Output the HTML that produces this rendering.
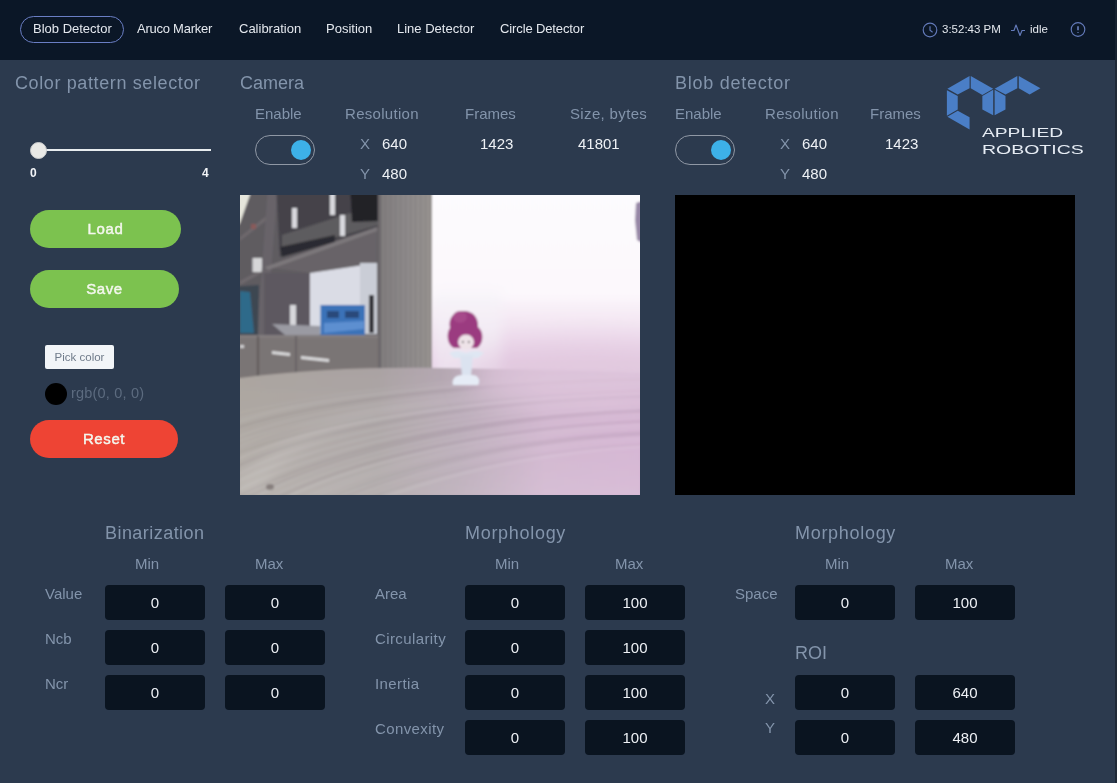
<!DOCTYPE html>
<html><head><meta charset="utf-8">
<style>
*{margin:0;padding:0;box-sizing:border-box}
html,body{width:1117px;height:783px;overflow:hidden;background:#2c3a4e;font-family:"Liberation Sans",sans-serif}
.a,.btn,.box{will-change:transform}
.a{position:absolute;white-space:nowrap;line-height:1}
#hdr{position:absolute;left:0;top:0;width:1117px;height:60px;background:#0b1727}
.nav{font-size:13px;color:#e4e8ee;top:22px}
.pill{position:absolute;left:20px;top:16px;width:104px;height:27px;border:1px solid #6a7ec4;border-radius:14px}
.t18{font-size:18px;color:#8394ab}
.t15{font-size:15px;color:#8394ab}
.v15{font-size:15px;color:#eef1f5}
.tog{position:absolute;width:60px;height:30px;border:1px solid #9098a5;border-radius:15px}
.tog i{position:absolute;left:35px;top:4px;width:20px;height:20px;border-radius:50%;background:#3db1e8}
.btn{position:absolute;height:38px;border-radius:19px;color:#f4f7ee;font-size:15px;font-weight:400;-webkit-text-stroke:0.45px #f4f7ee;display:flex;align-items:center;justify-content:center;letter-spacing:0.6px;padding-bottom:2px}
.box{position:absolute;width:100px;height:35px;background:#0a1420;border-radius:4px;color:#eef1f5;font-size:15px;display:flex;align-items:center;justify-content:center;padding-bottom:1px}
</style></head><body>
<div id="hdr">
  <div class="pill"></div>
  <div class="a nav" style="left:33px">Blob Detector</div>
  <div class="a nav" style="left:137px;letter-spacing:-0.25px">Aruco Marker</div>
  <div class="a nav" style="left:239px">Calibration</div>
  <div class="a nav" style="left:326px">Position</div>
  <div class="a nav" style="left:397px">Line Detector</div>
  <div class="a nav" style="left:500px;letter-spacing:-0.12px">Circle Detector</div>
  <svg class="a" style="left:922px;top:22px" width="16" height="16" viewBox="0 0 16 16"><circle cx="8" cy="8" r="6.8" fill="none" stroke="#637ab9" stroke-width="1.15"/><path d="M8 4.2V8.3L10.6 10.2" fill="none" stroke="#637ab9" stroke-width="1.15"/></svg>
  <div class="a nav" style="left:942px;font-size:11.5px;top:23.5px">3:52:43 PM</div>
  <svg class="a" style="left:1010px;top:22px" width="16" height="16" viewBox="0 0 16 16"><path d="M1 8.5H4L6 3L10 13.5L12 8.5H15" fill="none" stroke="#637ab9" stroke-width="1.15" stroke-linejoin="round"/></svg>
  <div class="a nav" style="left:1030px;font-size:11.5px;top:23.5px">idle</div>
  <svg class="a" style="left:1070px;top:22px" width="16" height="16" viewBox="0 0 16 16"><circle cx="8" cy="7.5" r="6.8" fill="none" stroke="#637ab9" stroke-width="1.15"/><path d="M8 4.3V8.2M8 10.2V10.9" fill="none" stroke="#6a80bd" stroke-width="1.6"/></svg>
</div>

<!-- left column -->
<div class="a t18" style="left:15px;top:73.7px;letter-spacing:0.62px">Color pattern selector</div>
<div class="a" style="left:38px;top:149px;width:173px;height:2px;background:#e8ecef"></div>
<div class="a" style="left:30px;top:141.5px;width:17px;height:17px;border-radius:50%;background:#e9e9e6;border:1px solid #c9cbcc"></div>
<div class="a" style="left:30px;top:166.5px;font-size:12px;font-weight:700;color:#f2f4f7">0</div>
<div class="a" style="left:201.5px;top:166.5px;font-size:12px;font-weight:700;color:#f2f4f7">4</div>
<div class="btn" style="left:30px;top:210px;width:151px;background:#7cc24f">Load</div>
<div class="btn" style="left:30px;top:270px;width:149px;background:#7cc24f">Save</div>
<div class="a" style="left:45px;top:345px;width:69px;height:24px;background:#f2f5f8;border-radius:2px;font-size:11.5px;color:#6f7b8a;display:flex;align-items:center;justify-content:center;padding-top:1.5px">Pick color</div>
<div class="a" style="left:45px;top:383px;width:22px;height:22px;border-radius:50%;background:#000"></div>
<div class="a" style="left:71px;top:386px;font-size:14.5px;color:#5c6b7f;letter-spacing:0.2px">rgb(0, 0, 0)</div>
<div class="btn" style="left:30px;top:420px;width:148px;background:#ee4434">Reset</div>

<!-- camera -->
<div class="a t18" style="left:240px;top:73.7px">Camera</div>
<div class="a t15" style="left:255px;top:106px">Enable</div>
<div class="a t15" style="left:345px;top:106px;letter-spacing:0.3px">Resolution</div>
<div class="a t15" style="left:465px;top:106px">Frames</div>
<div class="a t15" style="left:570px;top:106px;letter-spacing:0.35px">Size, bytes</div>
<div class="tog" style="left:255px;top:135px"><i></i></div>
<div class="a t15" style="left:360px;top:136px">X</div>
<div class="a t15" style="left:360px;top:166px">Y</div>
<div class="a v15" style="left:382px;top:136px">640</div>
<div class="a v15" style="left:382px;top:166px">480</div>
<div class="a v15" style="left:480px;top:136px">1423</div>
<div class="a v15" style="left:578px;top:136px">41801</div>
<div class="a" id="cam" style="left:240px;top:195px;width:400px;height:300px;overflow:hidden;background:#b9b2b4"><svg width="400" height="300" viewBox="0 0 400 300" style="display:block">
<defs>
<filter id="bl" x="-5%" y="-5%" width="110%" height="110%"><feGaussianBlur stdDeviation="0.8"/></filter>
<filter id="bl4" x="-50%" y="-100%" width="200%" height="300%"><feGaussianBlur stdDeviation="14"/></filter>
<filter id="bl3" x="-20%" y="-20%" width="140%" height="140%"><feGaussianBlur stdDeviation="6"/></filter>
<linearGradient id="wall" x1="0" y1="0" x2="0" y2="1">
<stop offset="0" stop-color="#fdfbfe"/><stop offset="0.34" stop-color="#fcf8fc"/><stop offset="0.45" stop-color="#f1e2f0"/><stop offset="0.55" stop-color="#e6cde4"/><stop offset="0.62" stop-color="#dfc4dd"/><stop offset="1" stop-color="#d8b9d6"/></linearGradient>
<linearGradient id="tab" x1="0" y1="0" x2="1" y2="0">
<stop offset="0" stop-color="#aba59f"/><stop offset="0.35" stop-color="#aaa3a3"/><stop offset="0.55" stop-color="#b8a9b6"/><stop offset="0.75" stop-color="#cfb3cd"/><stop offset="1" stop-color="#d3b1d1"/></linearGradient>
<linearGradient id="tabv" x1="0" y1="0" x2="0" y2="1">
<stop offset="0" stop-color="#ffffff" stop-opacity="0"/><stop offset="0.5" stop-color="#ffffff" stop-opacity="0.05"/><stop offset="1" stop-color="#ffffff" stop-opacity="0.15"/></linearGradient>
<linearGradient id="haze" x1="0" y1="0" x2="0" y2="1"><stop offset="0" stop-color="#e3cde1" stop-opacity="0.9"/><stop offset="1" stop-color="#e3cde1" stop-opacity="0"/></linearGradient>
<linearGradient id="panel" x1="0" y1="0" x2="1" y2="0">
<stop offset="0" stop-color="#7f7b7c"/><stop offset="0.5" stop-color="#8d898a"/><stop offset="1" stop-color="#96928f"/></linearGradient>
<pattern id="stripes" width="5" height="10" patternUnits="userSpaceOnUse"><rect x="0" width="1.2" height="10" fill="#000" fill-opacity="0.07"/></pattern>
<pattern id="grain" width="400" height="6" patternUnits="userSpaceOnUse"><rect y="0" width="400" height="1.5" fill="#000" fill-opacity="0.025"/><rect y="3" width="400" height="1" fill="#fff" fill-opacity="0.03"/></pattern>
<clipPath id="tabclip"><path d="M-10,184 L0,183 C60,175 130,172 200,173 C280,174 350,176 400,178 L410,178 L410,310 L-10,310 Z"/></clipPath>
</defs>
<g filter="url(#bl)">
<rect x="-10" y="-10" width="420" height="320" fill="url(#wall)"/>
<!-- pink haze horizontal variation -->
<rect x="192" y="95" width="70" height="90" fill="#f4f2f8" fill-opacity="0.55" filter="url(#bl3)"/>
<!-- shelving background -->
<rect x="-10" y="-10" width="202" height="195" fill="#5f5b60"/>
<polygon points="-10,-10 11,-10 10,0 0,28 -10,40" fill="#e6e6dc"/>
<!-- left column boards -->
<polygon points="0,42 31,17 32,21 0,46" fill="#6e696d"/>
<polygon points="0,86 20,75 20,79 0,90" fill="#6e696d"/>
<rect x="12.5" y="63" width="9.5" height="14" fill="#d6d6d8"/>
<rect x="11" y="29" width="5" height="5" fill="#8a5a5a"/>
<!-- vertical partition -->
<polygon points="28,-10 38,-10 26,140 17,140" fill="#686369"/>
<!-- upper compartment objects -->
<polygon points="36,-10 139,-10 139,32 40,62" fill="#45434a"/>
<polygon points="42,40 110,18 139,20 139,30 42,58" fill="#5d5c5e"/>
<polygon points="40,52 95,40 95,47 42,62" fill="#2c2c30"/>
<rect x="52" y="13" width="5" height="20" fill="#d9d9de"/>
<rect x="90" y="-10" width="5" height="30" fill="#d9d9de"/>
<rect x="100" y="20" width="5" height="21" fill="#d9d9de"/>
<polygon points="110,-10 139,-10 139,26 112,27" fill="#222228"/>
<!-- upper shelf board -->
<polygon points="25,72 137,32 137,68 70,78" fill="#686367"/>
<polygon points="25,72 137,32 137,36 28,75" fill="#7d787b"/>
<!-- lower-left compartment -->
<polygon points="-10,92 19,90 18,140 -10,140" fill="#3d4751"/>
<polygon points="0,96 10,97 14,138 0,138" fill="#2e6a8a"/>
<!-- lower partition wall -->
<polygon points="24,78 70,78 70,140 24,140" fill="#5d5960"/>
<!-- inner white wall -->
<polygon points="70,78 137,68 137,139 70,139" fill="#dadce5"/>
<rect x="120" y="68" width="17" height="71" fill="#cacdd6"/>
<!-- objects lower shelf -->
<rect x="50" y="110" width="6" height="27" fill="#d7d7db"/>
<polygon points="32,129 80,131 80,140 45,140" fill="#9a9aa2"/>
<rect x="80.5" y="110" width="44.5" height="30.5" fill="#3b72b8"/>
<rect x="87" y="116" width="12" height="7" fill="#2c4a7a"/>
<rect x="105" y="116" width="14" height="7" fill="#2c4a7a"/>
<polygon points="84,128 124,126 124,134 84,138" fill="#5d8fd0"/>
<rect x="129" y="100" width="5" height="38" fill="#35343a"/>
<!-- drawers -->
<rect x="-10" y="140" width="148" height="45" fill="#7a7474"/>
<rect x="0" y="140" width="138" height="3" fill="#827d7e"/>
<rect x="17" y="141" width="2" height="44" fill="#5e5a5c"/>
<rect x="55" y="141" width="2" height="44" fill="#676365"/>
<polygon points="32,156 50,158 50,161 32,159" fill="#dadadc"/>
<polygon points="61,161 89,164 89,167 61,164" fill="#dadadc"/>
<polygon points="0,150 4,150 4,153 0,153" fill="#d0d0d2"/>
<!-- tall panel -->
<rect x="138" y="-10" width="54" height="187" fill="url(#panel)"/>
<rect x="138" y="-10" width="54" height="187" fill="url(#stripes)"/>
<rect x="138" y="-10" width="3" height="187" fill="#6c686a"/>
<!-- right edge dark -->
<polygon points="396,8 402,6 402,48 397,45 395,25" fill="#9686a6"/>
<!-- table -->
<path d="M-10,184 L0,183 C60,175 130,172 200,173 C280,174 350,176 400,178 L410,178 L410,310 L-10,310 Z" fill="url(#tab)"/>
<path d="M0,183 C60,175 130,172 200,173 C280,174 350,176 400,178 L400,300 L0,300 Z" fill="url(#tabv)"/>

<g clip-path="url(#tabclip)"><path d="M-10,220 C92,194 250,180 410,178" stroke="#ffffff" stroke-opacity="0.07" stroke-width="1.2" fill="none"/>
<path d="M-10,226 C86,197 250,183 410,180" stroke="#ffffff" stroke-opacity="0.07" stroke-width="1.1" fill="none"/>
<path d="M-10,230 C67,200 250,185 410,182" stroke="#ffffff" stroke-opacity="0.06" stroke-width="3.1" fill="none"/>
<path d="M-10,235 C84,203 250,187 410,184" stroke="#554a52" stroke-opacity="0.07" stroke-width="2.4" fill="none"/>
<path d="M-10,245 C69,209 250,192 410,188" stroke="#ffffff" stroke-opacity="0.08" stroke-width="1.7" fill="none"/>
<path d="M-10,249 C95,212 250,194 410,190" stroke="#ffffff" stroke-opacity="0.08" stroke-width="1.5" fill="none"/>
<path d="M-10,256 C64,217 250,197 410,193" stroke="#ffffff" stroke-opacity="0.07" stroke-width="1.2" fill="none"/>
<path d="M-10,261 C95,220 250,200 410,196" stroke="#554a52" stroke-opacity="0.05" stroke-width="1.8" fill="none"/>
<path d="M-10,268 C75,224 250,203 410,198" stroke="#ffffff" stroke-opacity="0.08" stroke-width="2.7" fill="none"/>
<path d="M-10,275 C77,229 250,206 410,201" stroke="#554a52" stroke-opacity="0.07" stroke-width="2.8" fill="none"/>
<path d="M-10,284 C69,235 250,210 410,205" stroke="#ffffff" stroke-opacity="0.06" stroke-width="2.9" fill="none"/>
<path d="M-10,290 C94,239 250,213 410,208" stroke="#ffffff" stroke-opacity="0.07" stroke-width="2.9" fill="none"/>
<path d="M-10,299 C95,245 250,217 410,212" stroke="#ffffff" stroke-opacity="0.07" stroke-width="2.5" fill="none"/>
<path d="M-10,305 C100,249 250,220 410,215" stroke="#554a52" stroke-opacity="0.07" stroke-width="2.2" fill="none"/>
<path d="M-10,310 C109,251 250,222 410,216" stroke="#554a52" stroke-opacity="0.06" stroke-width="3.5" fill="none"/>
<path d="M-10,315 C88,255 250,225 410,219" stroke="#ffffff" stroke-opacity="0.07" stroke-width="1.1" fill="none"/>
<path d="M-10,320 C68,258 250,227 410,221" stroke="#ffffff" stroke-opacity="0.04" stroke-width="2.9" fill="none"/>
<path d="M-10,325 C87,261 250,229 410,223" stroke="#ffffff" stroke-opacity="0.08" stroke-width="1.2" fill="none"/>
<path d="M-10,332 C77,266 250,233 410,226" stroke="#554a52" stroke-opacity="0.06" stroke-width="3.2" fill="none"/>
<path d="M-10,338 C69,270 250,236 410,229" stroke="#ffffff" stroke-opacity="0.08" stroke-width="3.4" fill="none"/>
<path d="M-10,343 C95,273 250,238 410,231" stroke="#ffffff" stroke-opacity="0.05" stroke-width="2.2" fill="none"/>
<path d="M-10,348 C94,276 250,240 410,233" stroke="#ffffff" stroke-opacity="0.06" stroke-width="1.9" fill="none"/>
<path d="M-10,357 C101,282 250,244 410,237" stroke="#554a52" stroke-opacity="0.05" stroke-width="2.5" fill="none"/>
<path d="M-10,361 C108,285 250,246 410,239" stroke="#554a52" stroke-opacity="0.06" stroke-width="3.2" fill="none"/>
<path d="M-10,367 C64,289 250,249 410,241" stroke="#ffffff" stroke-opacity="0.05" stroke-width="2.6" fill="none"/>
<path d="M-10,372 C63,291 250,251 410,243" stroke="#ffffff" stroke-opacity="0.05" stroke-width="1.9" fill="none"/>
<path d="M-10,375 C62,294 250,253 410,245" stroke="#ffffff" stroke-opacity="0.05" stroke-width="1.9" fill="none"/>
<path d="M-10,384 C81,299 250,257 410,249" stroke="#554a52" stroke-opacity="0.04" stroke-width="1.6" fill="none"/>
<path d="M-10,390 C88,303 250,260 410,251" stroke="#ffffff" stroke-opacity="0.08" stroke-width="3.5" fill="none"/></g>
<path d="M-10,300 C20,250 80,215 200,205 C280,200 340,204 400,210 L400,215 C330,210 250,210 180,218 C90,230 40,260 20,300 Z" fill="#ffffff" fill-opacity="0.10" filter="url(#bl3)"/>

<ellipse cx="350" cy="180" rx="120" ry="30" fill="#e0c8de" fill-opacity="0.75" filter="url(#bl4)"/>
<ellipse cx="30" cy="292" rx="4" ry="3" fill="#5a5050" fill-opacity="0.5"/>
<!-- figurine -->
<path d="M222,116 C232,115 239,122 238,132 C244,136 244,149 237,153 L214,153 C207,150 206,138 210,133 C208,124 213,117 222,116 Z" fill="#9b3b80"/>
<ellipse cx="220" cy="122" rx="7" ry="6" fill="#a6488a"/>
<ellipse cx="226" cy="147" rx="8" ry="7.5" fill="#eee3e8"/>
<rect x="222" y="146" width="1.5" height="2" fill="#444"/><rect x="228" y="146" width="1.5" height="2" fill="#444"/>
<path d="M209,158 C215,155 222,156 226,158 C230,156 238,155 244,158 L238,163 L214,163 Z" fill="#dfe7f3"/>
<polygon points="220,160 233,160 231,181 222,181" fill="#dbe3f0"/>
<path d="M213,190 C211,184 216,180 222,180 L232,180 C238,180 241,185 238,190 Z" fill="#e6ecf6"/>
</g>
</svg></div>

<!-- blob detector -->
<div class="a t18" style="left:675px;top:73.7px;letter-spacing:0.75px">Blob detector</div>
<div class="a t15" style="left:675px;top:106px">Enable</div>
<div class="a t15" style="left:765px;top:106px;letter-spacing:0.3px">Resolution</div>
<div class="a t15" style="left:870px;top:106px">Frames</div>
<div class="tog" style="left:675px;top:135px"><i></i></div>
<div class="a t15" style="left:780px;top:136px">X</div>
<div class="a t15" style="left:780px;top:166px">Y</div>
<div class="a v15" style="left:802px;top:136px">640</div>
<div class="a v15" style="left:802px;top:166px">480</div>
<div class="a v15" style="left:885px;top:136px">1423</div>
<div class="a" style="left:675px;top:195px;width:400px;height:300px;background:#000"></div>

<!-- logo -->
<svg class="a" style="left:940px;top:70px" width="110" height="65" viewBox="0 0 1117 660">
<g fill="#4a7ec6">
<polygon points="75,190 300,62 300,185 180,250"/>
<polygon points="312,62 540,190 430,255 312,185"/>
<polygon points="70,205 180,265 180,400 70,465"/>
<polygon points="75,475 180,415 300,480 300,605"/>
<polygon points="430,265 540,200 540,460 430,400"/>
<polygon points="555,200 665,265 665,400 555,460"/>
<polygon points="555,190 785,62 785,185 665,250"/>
<polygon points="800,62 1020,185 910,250 800,185"/>
</g></svg>
<div class="a" style="left:982px;top:126px;font-size:13px;color:#e6ecf4;transform:scaleX(1.477);transform-origin:0 0">APPLIED</div>
<div class="a" style="left:982px;top:143px;font-size:13px;color:#e6ecf4;transform:scaleX(1.498);transform-origin:0 0">ROBOTICS</div>

<!-- bottom forms -->
<div class="a t18" style="left:105px;top:524px;letter-spacing:0.45px">Binarization</div>
<div class="a t15" style="left:135px;top:556px">Min</div>
<div class="a t15" style="left:255px;top:556px">Max</div>
<div class="a t15" style="left:45px;top:586.3px">Value</div>
<div class="box" style="left:105px;top:585px">0</div>
<div class="box" style="left:225px;top:585px">0</div>
<div class="a t15" style="left:45px;top:631.3px">Ncb</div>
<div class="box" style="left:105px;top:630px">0</div>
<div class="box" style="left:225px;top:630px">0</div>
<div class="a t15" style="left:45px;top:676.3px">Ncr</div>
<div class="box" style="left:105px;top:675px">0</div>
<div class="box" style="left:225px;top:675px">0</div>
<div class="a t18" style="left:465px;top:524px;letter-spacing:0.7px">Morphology</div>
<div class="a t15" style="left:495px;top:556px">Min</div>
<div class="a t15" style="left:615px;top:556px">Max</div>
<div class="a t15" style="left:375px;top:586.3px">Area</div>
<div class="box" style="left:465px;top:585px">0</div>
<div class="box" style="left:585px;top:585px">100</div>
<div class="a t15" style="left:375px;top:631.3px;letter-spacing:0.4px">Circularity</div>
<div class="box" style="left:465px;top:630px">0</div>
<div class="box" style="left:585px;top:630px">100</div>
<div class="a t15" style="left:375px;top:676.3px;letter-spacing:0.4px">Inertia</div>
<div class="box" style="left:465px;top:675px">0</div>
<div class="box" style="left:585px;top:675px">100</div>
<div class="a t15" style="left:375px;top:721.3px;letter-spacing:0.4px">Convexity</div>
<div class="box" style="left:465px;top:720px">0</div>
<div class="box" style="left:585px;top:720px">100</div>
<div class="a t18" style="left:795px;top:524px;letter-spacing:0.7px">Morphology</div>
<div class="a t15" style="left:825px;top:556px">Min</div>
<div class="a t15" style="left:945px;top:556px">Max</div>
<div class="a t15" style="left:735px;top:586.3px">Space</div>
<div class="box" style="left:795px;top:585px">0</div>
<div class="box" style="left:915px;top:585px">100</div>
<div class="a t18" style="left:795px;top:643.5px">ROI</div>
<div class="a t15" style="left:765px;top:690.5px">X</div>
<div class="box" style="left:795px;top:675px">0</div>
<div class="box" style="left:915px;top:675px">640</div>
<div class="a t15" style="left:765px;top:720px">Y</div>
<div class="box" style="left:795px;top:720px">0</div>
<div class="box" style="left:915px;top:720px">480</div>
<div class="a" style="left:1115px;top:0;width:2px;height:60px;background:#162130"></div>
<div class="a" style="left:1115px;top:60px;width:2px;height:723px;background:#1f2937"></div>
</body></html>
